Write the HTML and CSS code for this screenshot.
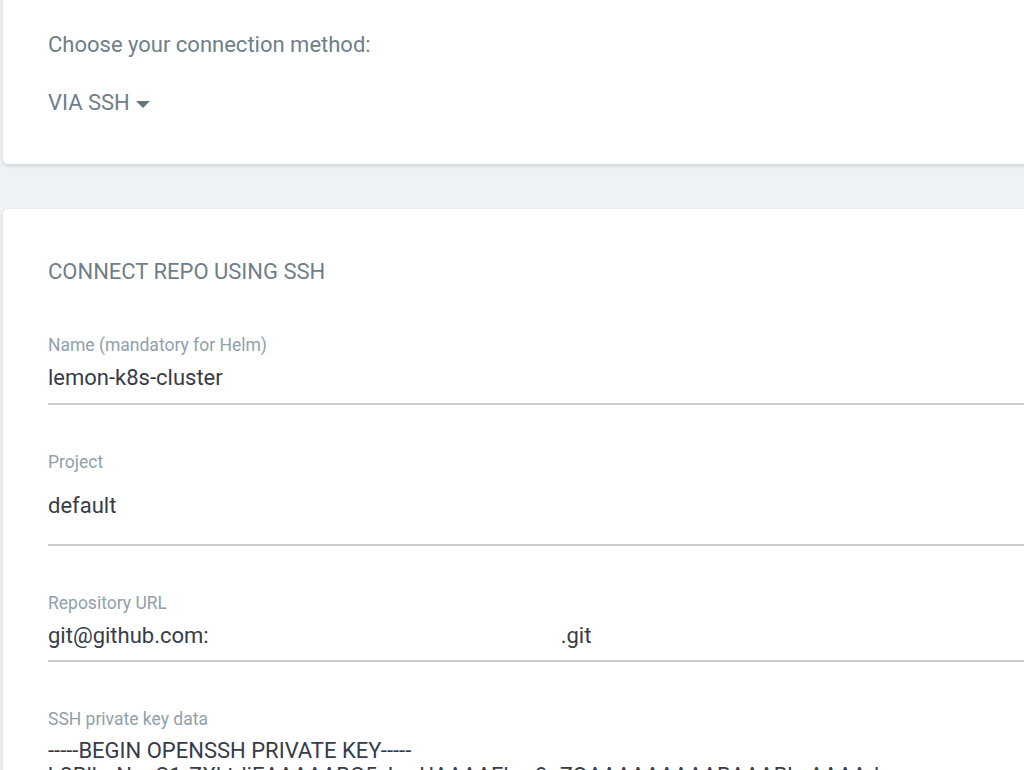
FILE: index.html
```html
<!DOCTYPE html>
<html>
<head>
<meta charset="utf-8">
<link rel="stylesheet" href="styles.css">
</head>
<body>
<div class="page">
  <section class="card card-method">
    <p class="method-title">Choose your connection method:</p>
    <div class="method-select">VIA SSH <span class="caret"></span></div>
  </section>
  <section class="card card-form">
    <h2 class="form-title">CONNECT REPO USING SSH</h2>
    <div class="field">
      <label class="field-label">Name (mandatory for Helm)</label>
      <div class="field-value">lemon-k8s-cluster</div>
    </div>
    <div class="field field-select">
      <label class="field-label">Project</label>
      <div class="field-value">default</div>
    </div>
    <div class="field field-url">
      <label class="field-label">Repository URL</label>
      <div class="field-value">git@github.com:<span class="redacted"></span>.git</div>
    </div>
    <div class="field field-key">
      <label class="field-label">SSH private key data</label>
      <div class="key-text">-----BEGIN OPENSSH PRIVATE KEY-----<br>b3BlbnNzaC1rZXktdjEAAAAABG5vbmUAAAAEbm9uZQAAAAAAAAABAAABlwAAAAdz</div>
    </div>
  </section>
</div>
</body>
</html>
```

FILE: styles.css
```css
html, body {
  margin: 0;
  padding: 0;
  height: 100%;
  overflow: hidden;
}
body {
  background: #eef2f5;
  font-family: Roboto, "Liberation Sans", sans-serif;
}
.page {
  padding-left: 3px;
  margin-right: -20px;
}
.card {
  background: #fff;
  border-radius: 5px;
  box-shadow: 0 2px 4px rgba(0, 0, 0, 0.12);
}
.card-method {
  margin-top: -20px;
  padding: 52px 0 0 45px;
  height: 184px;
  box-sizing: border-box;
}
.method-title {
  margin: 0;
  font-size: 22px;
  line-height: 26px;
  color: #6d7f8b;
}
.method-select {
  margin-top: 32px;
  font-size: 22px;
  line-height: 26px;
  color: #6d7f8b;
  display: flex;
  align-items: center;
  gap: 6px;
}
.caret {
  width: 0;
  height: 0;
  border-left: 7px solid transparent;
  border-right: 7px solid transparent;
  border-top: 7px solid #65757f;
  margin-top: 2px;
}
.card-form {
  margin-top: 45px;
  padding: 50px 0 0 45px;
  height: 700px;
}
.form-title {
  margin: 0 0 49.5px;
  font-weight: 400;
  font-size: 22px;
  line-height: 26px;
  color: #6d7f8b;
}
.field {
  display: flex;
  flex-direction: column;
}
.field-label {
  font-size: 17.5px;
  line-height: 20px;
  color: #8fa1ad;
}
.field-value {
  font-size: 22px;
  line-height: 26px;
  color: #363c4a;
  padding: 10px 0 12.5px;
  border-bottom: 2px solid #cccccc;
}
.field + .field {
  margin-top: 46.5px;
}
.field-select .field-value {
  padding: 21.5px 0 25px;
}
.field-url {
  margin-top: 47.5px;
}
.field.field-url .field-value {
  padding: 10.5px 0 11px;
}
.field.field-key {
  margin-top: 47px;
}
.redacted {
  display: inline-block;
  width: 352px;
}
.key-text {
  font-size: 22px;
  line-height: 25px;
  color: #363c4a;
  padding-top: 9px;
  white-space: nowrap;
}
```
